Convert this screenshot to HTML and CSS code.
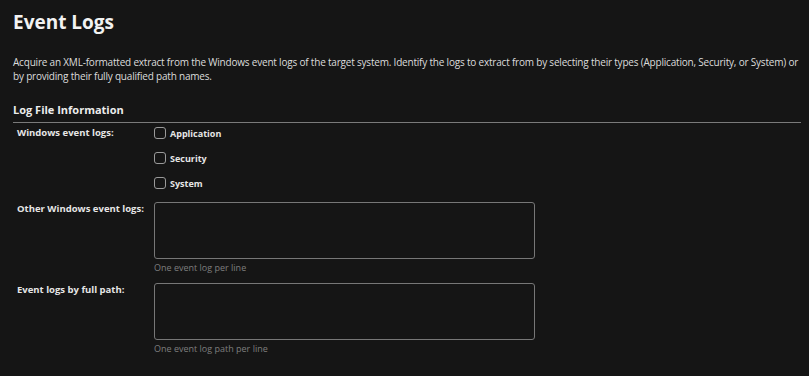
FILE: index.html
```html
<!DOCTYPE html>
<html lang="en">
<head>
<meta charset="utf-8">
<title>Event Logs</title>
<link rel="stylesheet" href="styles.css">
</head>
<body>
<main class="page">
  <h1 class="title">Event Logs</h1>
  <p class="desc">Acquire an XML-formatted extract from the Windows event logs of the target system. Identify the logs to extract from by selecting their types (Application, Security, or System) or by providing their fully qualified path names.</p>
  <h2 class="section">Log File Information</h2>
  <div class="form">
    <div class="row">
      <div class="label label-first">Windows event logs:</div>
      <div class="field checks">
        <label class="check"><span class="box"></span>Application</label>
        <label class="check"><span class="box"></span>Security</label>
        <label class="check"><span class="box"></span>System</label>
      </div>
    </div>
    <div class="row">
      <div class="label">Other Windows event logs:</div>
      <div class="field">
        <div class="area"></div>
        <div class="hint">One event log per line</div>
      </div>
    </div>
    <div class="row">
      <div class="label">Event logs by full path:</div>
      <div class="field">
        <div class="area"></div>
        <div class="hint">One event log path per line</div>
      </div>
    </div>
  </div>
</main>
</body>
</html>
```
FILE: styles.css
```css
html, body {
  margin: 0;
  padding: 0;
  background: #151515;
}
body {
  font-family: "Open Sans", "Noto Sans", sans-serif;
  color: #e6e6e6;
}
.page {
  padding: 8px 8px 0 13px;
}
.title {
  margin: 0;
  font-size: 19px;
  font-weight: 700;
  line-height: 28px;
  color: #f2f2f2;
}
.desc {
  margin: 19px 0 0;
  font-size: 10px;
  letter-spacing: -0.2px;
  line-height: 14px;
  color: #dcdcdc;
}
.section {
  margin: 19px 0 0;
  font-size: 11px;
  font-weight: 700;
  line-height: 16px;
  padding-bottom: 4px;
  border-bottom: 1px solid #7a7a7a;
  color: #ececec;
}
.row {
  display: flex;
}
.label {
  width: 141px;
  padding-left: 4px;
  padding-top: 9px;
  box-sizing: border-box;
  font-size: 9.5px;
  font-weight: 700;
  line-height: 14px;
  color: #e6e6e6;
}
.label-first {
  padding-top: 0;
  line-height: 20px;
}
.checks {
  display: flex;
  flex-direction: column;
  gap: 5px;
}
.check {
  display: flex;
  align-items: center;
  height: 20px;
  font-size: 9px;
  font-weight: 700;
  color: #e6e6e6;
}
.box {
  width: 10px;
  height: 10px;
  border: 1px solid #9a9a9a;
  border-radius: 3px;
  margin-right: 4px;
}
.area {
  width: 379px;
  height: 55px;
  border: 1px solid #777;
  border-radius: 3px;
  margin-top: 9px;
}
.hint {
  font-size: 9px;
  line-height: 12px;
  padding-top: 3px;
  color: #7e7e7e;
}
```
